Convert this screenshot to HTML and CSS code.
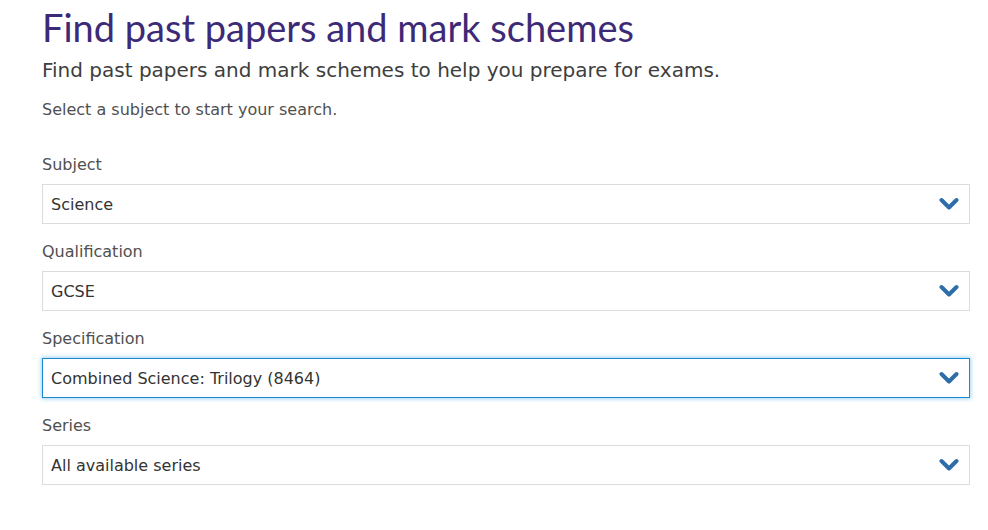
FILE: index.html
```html
<!DOCTYPE html>
<html lang="en">
<head>
<meta charset="utf-8">
<title>Find past papers and mark schemes</title>
<link rel="stylesheet" href="styles.css">
</head>
<body>
<main class="page">
  <h1 class="title">Find past papers and mark schemes</h1>
  <p class="lead">Find past papers and mark schemes to help you prepare for exams.</p>
  <p class="intro">Select a subject to start your search.</p>

  <div class="field">
    <label class="label">Subject</label>
    <div class="select"><span class="value">Science</span><svg class="chev" viewBox="0 0 20 14" width="20" height="14"><path d="M2.5 3 L10 10.5 L17.5 3" fill="none" stroke="currentColor" stroke-width="4" stroke-linecap="round" stroke-linejoin="round"/></svg></div>
  </div>
  <div class="field">
    <label class="label">Qualification</label>
    <div class="select"><span class="value">GCSE</span><svg class="chev" viewBox="0 0 20 14" width="20" height="14"><path d="M2.5 3 L10 10.5 L17.5 3" fill="none" stroke="currentColor" stroke-width="4" stroke-linecap="round" stroke-linejoin="round"/></svg></div>
  </div>
  <div class="field">
    <label class="label">Specification</label>
    <div class="select focused"><span class="value">Combined Science: Trilogy (8464)</span><svg class="chev" viewBox="0 0 20 14" width="20" height="14"><path d="M2.5 3 L10 10.5 L17.5 3" fill="none" stroke="currentColor" stroke-width="4" stroke-linecap="round" stroke-linejoin="round"/></svg></div>
  </div>
  <div class="field">
    <label class="label">Series</label>
    <div class="select"><span class="value">All available series</span><svg class="chev" viewBox="0 0 20 14" width="20" height="14"><path d="M2.5 3 L10 10.5 L17.5 3" fill="none" stroke="currentColor" stroke-width="4" stroke-linecap="round" stroke-linejoin="round"/></svg></div>
  </div>
</main>
</body>
</html>
```

FILE: styles.css
```css
html, body {
  margin: 0;
  padding: 0;
  background: #ffffff;
}
body {
  font-family: "DejaVu Sans", Verdana, sans-serif;
  color: #4a4a4a;
}
.page {
  padding: 0 18px 0 42px;
}
.title {
  margin: 0;
  padding-top: 6px;
  font-family: "Lato", "Open Sans", sans-serif;
  font-weight: 400;
  font-size: 38px;
  line-height: 42px;
  color: #3d2a76;
}
.lead {
  margin: 10px 0 0;
  font-size: 20px;
  line-height: 24px;
  color: #3e3e3e;
}
.intro {
  margin: 18px 0 0;
  font-size: 16px;
  line-height: 20px;
  color: #505050;
}
.field {
  display: flex;
  flex-direction: column;
}
.field:first-of-type {
  margin-top: 35px;
}
.label {
  font-size: 16px;
  line-height: 20px;
  color: #505050;
  margin-top: 18px;
  margin-bottom: 9px;
}
.field:first-of-type .label { margin-top: 0; }
.select {
  box-sizing: border-box;
  height: 40px;
  border: 1px solid #dcdcdc;
  display: flex;
  align-items: center;
  justify-content: space-between;
  padding: 0 10px 0 8px;
}
.value {
  font-size: 16px;
  color: #333333;
}
.select.focused {
  border-color: #1a8ad0;
  box-shadow: 0 0 4px 1px rgba(60, 160, 230, 0.45);
}
.chev {
  color: #2e6da8;
  display: block;
}
```
